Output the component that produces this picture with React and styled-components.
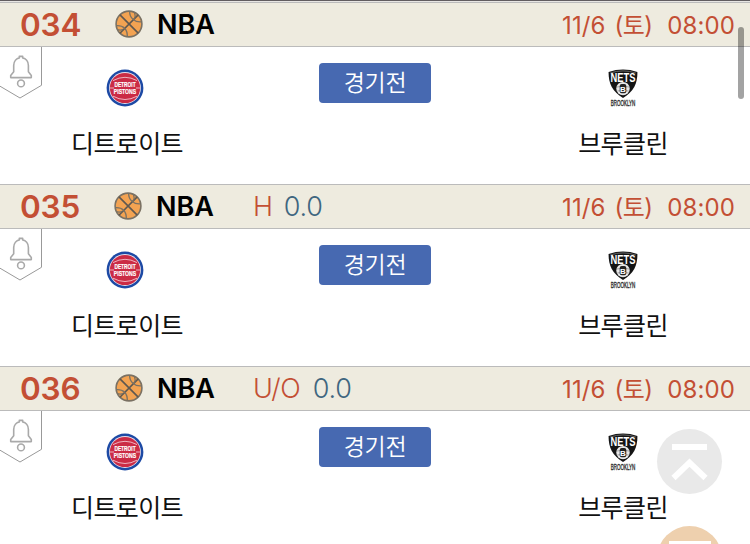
import React from 'react'
import styled, { createGlobalStyle } from 'styled-components';

const GlobalStyle = createGlobalStyle`
    *{
        box-sizing: border-box;
    }
    html, body{
        margin: 0;
        padding: 0;
        overflow: hidden;
        background: #fff;
        font-family: Inter, "Noto Sans CJK KR", sans-serif;
    }
`;

const games = [
    { id: '034', nudge: 0 },
    { id: '035', nudge: -1, type: 'H', value: '0.0', gap: 11 },
    { id: '036', nudge: 0, type: 'U/O', value: '0.0', gap: 12 },
];

function Basketball() {
    return (
        <svg width="28" height="28" viewBox="0 0 28 28" fill="none" stroke="#7a7163" strokeWidth="1.3">
            <circle cx="14" cy="14" r="12.9" fill="#f3a352" strokeWidth="1.6" />
            <path d="M5 4.9 23.2 23.1M23.2 4.9 4.9 23.2" stroke="#5f5850" strokeWidth="1.6" />
            <path d="M14.6 1.2C14.5 7.5 19.5 12.7 26.8 11.8" />
            <path d="M1.3 15.7C8.5 15.2 12.6 19.5 12.3 26.8" />
            <path d="M19.5 2.4C20.5 5 20.3 7 19.4 8.7" />
            <path d="M2 19.5C4.5 20.3 6.5 20.2 8.3 19.3" />
        </svg>
    )
}

function Bell() {
    return (
        <svg width="43" height="53" viewBox="0 0 43 53" fill="none">
            <path d="M41.5 0V38.3L20 51 0 39.2" stroke="#999" strokeWidth="1" />
            <g stroke="#a9a9a9" strokeWidth="1.6">
                <path d="M10.7 30.6V28.5L13.7 24.8V18.5C13.7 14.2 16.6 11.5 19.3 10.9V9.4H22.7V10.9C25.6 11.5 28.4 14.2 28.4 18.5V24.8L31.3 28.5V30.6Z" strokeLinejoin="round" />
                <circle cx="21" cy="36.4" r="3.4" />
            </g>
        </svg>
    )
}

function Pistons() {
    return (
        <svg width="38" height="44" viewBox="0 0 38 44" fontFamily="Liberation Sans, sans-serif" fontWeight="700" textAnchor="middle">
            <circle cx="19" cy="20" r="18.4" fill="#1d4aa5" />
            <circle cx="19" cy="20" r="15.9" fill="#e9dfea" />
            <circle cx="19" cy="20" r="15.1" fill="#cb2b45" />
            <g fill="none" stroke="#efb2bf" strokeWidth="1">
                <path d="M7 12.6Q19 6 31 12.6" />
                <path d="M7 28.2Q19 34.8 31 28.2" />
                <path d="M4 20H8M30 20H34" />
            </g>
            <text transform="translate(19 19.2) scale(.69 1)" fontSize="7" fill="#fff" stroke="#fff" strokeWidth=".2">DETROIT</text>
            <text transform="translate(19 25.6) scale(.73 1)" fontSize="7" fill="#fff" stroke="#fff" strokeWidth=".2">PISTONS</text>
        </svg>
    )
}

function Nets() {
    return (
        <svg width="32" height="44" viewBox="0 0 32 44" fontFamily="Liberation Sans, sans-serif" fontWeight="700" textAnchor="middle">
            <path d="M1.6 4Q16-.9 30.4 4C30.6 15 27 23.5 16 30C5 23.5 1.4 15 1.6 4Z" fill="#141414" />
            <path d="M3.2 5Q16 .8 28.8 5" fill="none" stroke="#888" strokeWidth=".7" />
            <text transform="translate(16 13.8) scale(.78 1)" fontSize="12" fill="#fff">NETS</text>
            <circle cx="16" cy="20.6" r="6.7" fill="#e8e8e8" />
            <path d="M9.8 19Q16 17.5 22.2 19M10.3 23Q16 21.5 21.7 23" fill="none" stroke="#888" strokeWidth=".7" />
            <rect x="12.7" y="15.9" width="6.6" height="9.4" rx="2" fill="#222" />
            <text x="16" y="23.5" fontSize="8" fill="#fff">B</text>
            <text transform="translate(16 38.4) scale(.53 1)" fontSize="8.5" fontWeight="400" fill="#333" stroke="#333" strokeWidth=".4">BROOKLYN</text>
        </svg>
    )
}

function Game({ game }) {
    return (
        <GameStyled>
            <Header>
                <Number>{game.id}</Number>
                <League $nudge={game.nudge}>
                    <Basketball />
                    <span>NBA</span>
                </League>
                <Market $gap={game.gap}>
                    <span>{game.type}</span>
                    <b>{game.value}</b>
                </Market>
                <StartTime>
                    <span>11/6</span>
                    <Day>(토)</Day>
                    <span>08:00</span>
                </StartTime>
            </Header>
            <Match>
                <Alarm><Bell /></Alarm>
                <Team $shift={1}>
                    <Pistons />
                    <TeamName $indent={3}>디트로이트</TeamName>
                </Team>
                <Status>경기전</Status>
                <Team $shift={-4}>
                    <Nets />
                    <TeamName $indent={0}>브루클린</TeamName>
                </Team>
            </Match>
        </GameStyled>
    )
}

function App() {
    return (
        <Page>
            <GlobalStyle />
            <TopLine />
            {games.map((game) => <Game key={game.id} game={game} />)}
            <Scrollbar />
            <RoundButton $top={429} $color="#e9e9e9">
                <svg width="65" height="65" viewBox="0 0 65 65" fill="none" stroke="#fff" strokeWidth="6">
                    <path d="M15 18H50M16.5 49 32.5 33.7 48.5 49" />
                </svg>
            </RoundButton>
            <RoundButton $top={526} $color="#eed0ae">
                <svg width="65" height="65" viewBox="0 0 65 65" fill="none" stroke="#fff" strokeWidth="6">
                    <path d="M12 18H54" />
                </svg>
            </RoundButton>
        </Page>
    )
}

const Page = styled.div`
    position: relative;
    width: 750px;
    height: 544px;
    overflow: hidden;
    background: #fff;
`;

const TopLine = styled.div`
    height: 2px;
    background: #e8e6e4;
    border-top: 1px solid #625d60;
`;

const GameStyled = styled.section`
    height: 182px;
`;

const Header = styled.div`
    display: grid;
    grid-template-columns: 94px 138px 1fr auto;
    align-items: center;
    height: 45px;
    padding: 0 15px 0 20px;
    background: #eeebdf;
    border-top: 1px solid #bbb;
    border-bottom: 1px solid #bbb;
    line-height: 39px;
    white-space: nowrap;
`;

const Number = styled.span`
    font-size: 31.5px;
    font-weight: 600;
    letter-spacing: -.2px;
    color: #c34f34;
`;

const League = styled.div`
    display: flex;
    align-items: center;
    gap: 14px;
    margin-left: ${(props) => props.$nudge}px;
    padding-left: 1px;
    font-size: 27px;
    font-weight: 600;
    color: #000;
    svg{
        margin-bottom: 1px;
    }
`;

const Market = styled.div`
    display: flex;
    gap: ${(props) => props.$gap}px;
    padding-left: 1px;
    font-size: 27px;
    font-weight: 350;
    letter-spacing: -.2px;
    color: #c34f34;
    b{
        font-weight: 350;
        color: #3f6680;
    }
`;

const StartTime = styled.div`
    display: flex;
    padding-top: 1px;
    font-size: 24px;
    font-weight: 380;
    letter-spacing: .1px;
    color: #c34f34;
`;

const Day = styled.span`
    margin: 0 15px 0 9px;
    letter-spacing: -.6px;
`;

const Match = styled.div`
    position: relative;
    display: grid;
    grid-template-columns: repeat(3, 1fr);
    justify-items: center;
    height: 137px;
`;

const Alarm = styled.div`
    position: absolute;
    top: 0;
    left: 0;
    svg{
        display: block;
    }
`;

const Team = styled.div`
    display: flex;
    flex-direction: column;
    align-items: center;
    padding-top: 21px;
    margin-left: ${(props) => props.$shift}px;
    svg{
        display: block;
        height: 44px;
    }
`;

const TeamName = styled.div`
    margin-top: 14px;
    padding-left: ${(props) => props.$indent}px;
    font-size: 25px;
    line-height: 37px;
    letter-spacing: -.6px;
    color: #111;
`;

const Status = styled.div`
    width: 112px;
    height: 40px;
    margin-top: 16px;
    border-radius: 4px;
    background: #4769b1;
    color: #fff;
    font-size: 23px;
    font-weight: 350;
    line-height: 40px;
    letter-spacing: -.3px;
    text-align: center;
`;

const Scrollbar = styled.div`
    position: absolute;
    top: 27px;
    right: 6px;
    width: 6px;
    height: 72px;
    border-radius: 3px;
    background: rgba(0, 0, 0, .36);
`;

const RoundButton = styled.div`
    position: absolute;
    top: ${(props) => props.$top}px;
    left: 657px;
    width: 65px;
    height: 65px;
    border-radius: 50%;
    background: ${(props) => props.$color};
`;

export default App;
